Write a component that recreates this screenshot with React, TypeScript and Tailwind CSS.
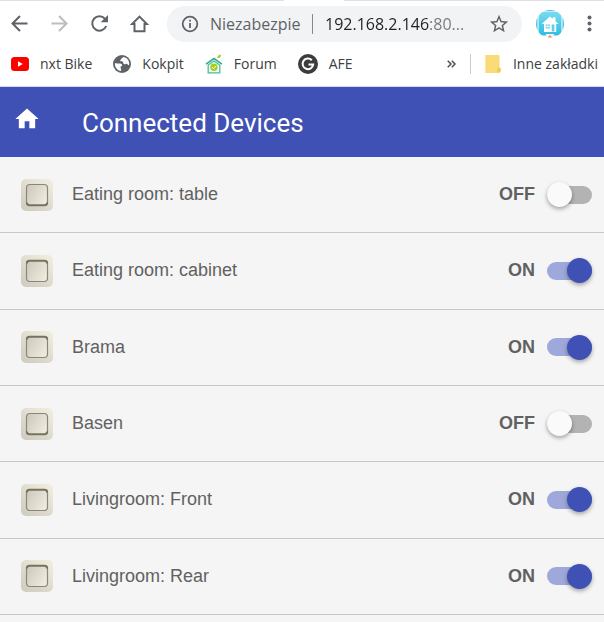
import React, { useState } from 'react';

interface Device {
  name: string;
  on: boolean;
}

const initialDevices: Device[] = [
  { name: 'Eating room: table', on: false },
  { name: 'Eating room: cabinet', on: true },
  { name: 'Brama', on: true },
  { name: 'Basen', on: false },
  { name: 'Livingroom: Front', on: true },
  { name: 'Livingroom: Rear', on: true },
];

function YoutubeIcon() {
  return (
    <svg className="w-[18px] h-[18px]" viewBox="0 0 18 18">
      <rect x="0" y="2" width="18" height="14" rx="3.5" fill="#fe0000" />
      <path d="M7 6.2v5.6L11.8 9z" fill="#fff" />
    </svg>
  );
}

function GlobeIcon() {
  return (
    <svg className="w-[18px] h-[18px]" viewBox="0 0 18 18">
      <circle cx="9" cy="9" r="9" fill="#5f6368" />
      <path
        d="M1.800 8.300c1.600-.3 3 .2 4.200.2 1.400 0 3 .3 3.200 1.700.1 1-1.700.9-1.700 2 0 1 .9 1.300.7 2.300l-.3 1.600C4.500 15.700 1.800 12.600 1.800 8.300z"
        fill="#fff"
      />
      <path
        d="M10.200 1.900c-.2 1-1.700.9-1.800 1.900 0 .9-1.500.9-1.200 1.900.3.900 2.200.3 2.800 1.200.5.800.2 1.900 1.300 2.300 1.100.3 1.700-.8 2.600-.5.8.3.7 1.400 1.600 1.500.4-.1.700-.8.700-1.700 0-3.400-2.500-6.200-6-6.600z"
        fill="#fff"
      />
    </svg>
  );
}

function ForumIcon() {
  return (
    <svg className="w-[18px] h-5" viewBox="0 0 18 20">
      <path d="M1 10.200 9 4.600l8 5.600" fill="none" stroke="#2fae8e" strokeWidth="1.600" />
      <path d="M3.200 11v7.900h11.600V11L9 7z" fill="#f2fbf5" stroke="#4dbb9d" strokeWidth="1.300" />
      <circle cx="9" cy="13.300" r="3.700" fill="#a4cf1c" />
      <path d="M7 13.200l1.500 1.500 2.700-2.800" fill="none" stroke="#fff" strokeWidth="1" />
      <path d="M12.300 4.300c-.2-2 1.200-3.400 3.700-3.800.1 2.400-1 3.900-3.700 3.800z" fill="#a4cf1c" />
    </svg>
  );
}

function AfeIcon() {
  return (
    <svg className="w-5 h-5" viewBox="0 0 20 20">
      <circle cx="10" cy="10" r="10" fill="#3c3c3c" />
      <path d="M13.800 6.200A5.300 5.300 0 1 0 15.200 10.400H10.500" fill="none" stroke="#fff" strokeWidth="2" />
    </svg>
  );
}

function FolderIcon() {
  return (
    <svg className="w-4 h-[18px]" viewBox="0 0 16 18">
      <path d="M1 0h12.500q1 0 1 1v11.500q1.500.5 1.500 2.500t-1.800 3H1q-1 0-1-1V1q0-1 1-1z" fill="#f9dc78" />
      <path d="M12 17.600v-3q0-2 2.500-2.200 1.500.5 1.300 2.600-.2 2.300-2 2.600z" fill="#eecb58" />
      <path d="M.5 1v16" stroke="#fbe79b" />
    </svg>
  );
}

function AvatarIcon() {
  return (
    <svg className="w-7 h-7" viewBox="0 0 28 28">
      <defs>
        <linearGradient id="avatar" x1="0" y1="0" x2="0" y2="1">
          <stop offset="0" stopColor="#7adcf0" />
          <stop offset="1" stopColor="#2fbde2" />
        </linearGradient>
        <clipPath id="avatarClip">
          <circle cx="14" cy="14" r="14" />
        </clipPath>
      </defs>
      <g clipPath="url(#avatarClip)">
        <path d="M0 5v18h1.500V5zM26.500 5v18H28V5zM8 0h12v1H8z" fill="#4cc5e3" />
        <rect x="2.500" y="1.500" width="23" height="24" rx="4" fill="url(#avatar)" />
        <path d="M14 6.500l2.800 2.400V7.200h2.700v4l3 2.700h-2.300v8H8v-8H5.600z" fill="#fff" />
        <path d="M9.800 14.500h4v4h-4zM15.700 14.500h2.700v7h-2.700z" fill="#63cde9" />
        <path d="M9.800 16.500h4M11.800 14.500v4" stroke="#fff" strokeWidth=".8" />
        <path d="M10 24h8v4h-8z" fill="#f9f1ec" />
        <path d="M12 27.500l2-2.500 2 2.500z" fill="#e98a6b" />
      </g>
    </svg>
  );
}

function SwitchIcon({ on }: { on: boolean }) {
  return (
    <svg className="w-8 h-8 shrink-0" viewBox="0 0 32 32">
      <defs>
        <linearGradient id="plate" x1="1" y1="0" x2="0.2" y2="1">
          <stop offset="0" stopColor="#f3efe0" />
          <stop offset="1" stopColor="#d0cdc1" />
        </linearGradient>
        <linearGradient id="rocker" x1="0" y1="0.2" x2="1" y2="0.8">
          <stop offset="0" stopColor="#cecbbe" />
          <stop offset="1" stopColor="#f0ecdf" />
        </linearGradient>
      </defs>
      <rect x="0" y="0" width="32" height="32" rx="5" fill="url(#plate)" />
      <rect x="5.500" y="5.500" width="21" height="21" rx="3.500" fill="url(#rocker)" stroke="#8a8678" strokeWidth="1.200" />
      <path
        d={on ? 'M5.800 8.500q0-2.700 2.700-2.700h15q2.700 0 2.700 2.700' : 'M5.800 23.500q0 2.700 2.700 2.700h15q2.700 0 2.700-2.700'}
        fill="none"
        stroke="#777361"
        strokeWidth="2"
      />
    </svg>
  );
}

const bookmarks = [
  { label: 'nxt Bike', icon: <YoutubeIcon /> },
  { label: 'Kokpit', icon: <GlobeIcon /> },
  { label: 'Forum', icon: <ForumIcon /> },
  { label: 'AFE', icon: <AfeIcon /> },
];

function Toolbar() {
  const [url, setUrl] = useState('192.168.2.146:80...');

  return (
    <div className="flex items-center h-[46px] pl-[9px] pr-0.5 text-[#5f6368]">
      <div className="flex items-center gap-5">
        <button aria-label="Back">
          <svg className="w-5 h-5" viewBox="0 0 20 20" fill="none" stroke="currentColor" strokeWidth="2">
            <path d="M18.500 9.500H4M11 2L3.500 9.500 11 17" />
          </svg>
        </button>
        <button aria-label="Forward" className="text-[#bbbdbf]">
          <svg className="w-5 h-5" viewBox="0 0 20 20" fill="none" stroke="currentColor" strokeWidth="2">
            <path d="M2.500 9.500H17M10 2l7.500 7.500L10 17" />
          </svg>
        </button>
        <button aria-label="Reload">
          <svg className="w-5 h-5" viewBox="0 0 20 20" fill="none" stroke="currentColor" strokeWidth="2">
            <path d="M17.200 12A7.200 7.200 0 1 1 16 4.800" />
            <path d="M19 1v7.300h-7.300z" fill="currentColor" stroke="none" />
          </svg>
        </button>
        <button aria-label="Home">
          <svg className="w-5 h-5" viewBox="0 0 20 20" fill="none" stroke="currentColor" strokeWidth="2">
            <path d="M3.100 10H5.500V17.200h10V10h2.400L10.500 2.600z" />
          </svg>
        </button>
      </div>
      <div className="flex flex-1 min-w-0 items-center h-9 ml-[18px] pl-3.5 pr-3 rounded-full bg-[#f1f3f4]">
        <svg className="w-[18px] h-[18px] shrink-0" viewBox="0 0 18 18" fill="none" stroke="currentColor" strokeWidth="1.800">
          <circle cx="9" cy="9" r="7.300" />
          <path d="M9 8v5M9 4.800v1.800" />
        </svg>
        <span className="w-[92px] ml-[11px] overflow-hidden text-base whitespace-nowrap">Niezabezpie</span>
        <span className="w-px h-5 ml-2.5 mr-3 bg-[#85888c]" />
        <input
          aria-label="Address"
          value={url}
          onChange={(e) => setUrl(e.target.value)}
          className="flex-1 min-w-0 text-base outline-none text-transparent caret-black bg-clip-text bg-[linear-gradient(to_right,#202124_105px,#74777b_105px)]"
        />
        <button aria-label="Bookmark this page">
          <svg className="w-[22px] h-[22px]" viewBox="0 0 24 24" fill="currentColor">
            <path d="M22 9.240l-7.190-.620L12 2 9.190 8.630 2 9.240l5.460 4.730L5.820 21 12 17.270 18.180 21l-1.630-7.030L22 9.240zM12 15.400l-3.760 2.270 1-4.280-3.320-2.880 4.380-.380L12 6.100l1.710 4.040 4.380.380-3.320 2.880 1 4.280L12 15.400z" />
          </svg>
        </button>
      </div>
      <button aria-label="Profile" className="ml-3.5">
        <AvatarIcon />
      </button>
      <button aria-label="Menu" className="ml-3.5">
        <svg className="w-6 h-5" viewBox="0 0 24 20" fill="currentColor">
          <circle cx="11.500" cy="3.500" r="2" />
          <circle cx="11.500" cy="9.500" r="2" />
          <circle cx="11.500" cy="15.500" r="2" />
        </svg>
      </button>
    </div>
  );
}

function BookmarksBar() {
  return (
    <div className="flex items-center h-[39px] pb-1.5 pl-[11px] pr-1.5 text-[14px] text-[#3c4043] whitespace-nowrap">
      <div className="flex items-center gap-[21px]">
        {bookmarks.map((b) => (
          <a key={b.label} href="#" className="flex items-center gap-[11px]">
            {b.icon}
            {b.label}
          </a>
        ))}
      </div>
      <button aria-label="More bookmarks" className="ml-auto mr-3.5">
        <svg className="w-[9px] h-2" viewBox="0 0 9 8" fill="none" stroke="#4a4d51" strokeWidth="1.500">
          <path d="M.7.700L4 4 .7 7.300M4.800.700L8 4 4.800 7.300" />
        </svg>
      </button>
      <span className="w-px h-5 mr-3.5 bg-[#c8cacd]" />
      <a href="#" className="flex items-center gap-3">
        <FolderIcon />
        Inne zakładki
      </a>
    </div>
  );
}

export default function App() {
  const [devices, setDevices] = useState<Device[]>(initialDevices);

  const toggleDevice = (name: string) => {
    setDevices(prev => prev.map(d => (d.name === name ? { ...d, on: !d.on } : d)));
  };

  return (
    <div className="min-h-screen bg-[#f5f5f5]">
      {/* Browser chrome */}
      <div className="bg-white border-b border-[#d5d9ef] font-['Open_Sans','Noto_Sans',sans-serif]">
        <div className="flex h-px">
          <span className="w-[284px] bg-[#dee1e6]" />
          <span className="w-[60px]" />
          <span className="flex-1 bg-[#dee1e6]" />
        </div>
        <Toolbar />
        <BookmarksBar />
      </div>

      {/* Header */}
      <header className="flex items-center h-[70px] pl-[13px] bg-[#3f51b5] text-white">
        <a href="#" aria-label="Home" className="pb-1.5">
          <svg className="w-7 h-7" viewBox="0 0 24 24" fill="currentColor">
            <path d="M10 20v-6h4v6h5v-8h3L12 3 2 12h3v8z" />
          </svg>
        </a>
        <h1 className="ml-[41px] pt-0.5 text-[26px] font-['Roboto',sans-serif]">Connected Devices</h1>
      </header>

      {/* Device list */}
      <ul className="grid auto-rows-fr min-h-[458px] font-['Liberation_Sans',Arial,sans-serif] text-[18px] text-[#616161]">
        {devices.map((d) => (
          <li key={d.name} className="border-b border-[#c9c9c9]">
            <label className="flex items-center h-full pl-[21px] pr-3 cursor-pointer">
              <SwitchIcon on={d.on} />
              <span className="ml-[19px]">{d.name}</span>
              <span className="ml-auto mr-3 font-bold">{d.on ? 'ON' : 'OFF'}</span>
              <input
                type="checkbox"
                checked={d.on}
                onChange={() => toggleDevice(d.name)}
                className="peer sr-only"
              />
              <span className="flex items-center w-[45px] h-[18px] rounded-full bg-[#b3b3b3] peer-checked:bg-[#9fa8da] peer-checked:justify-end">
                <span
                  className={
                    d.on
                      ? 'w-[25px] h-[25px] shrink-0 rounded-full bg-[#3f51b5] shadow-[0_2px_4px_rgba(0,0,0,0.35)]'
                      : 'w-[25px] h-[25px] shrink-0 rounded-full bg-[#fafafa] shadow-[0_2px_4px_rgba(0,0,0,0.35)]'
                  }
                />
              </span>
            </label>
          </li>
        ))}
      </ul>
    </div>
  );
}
